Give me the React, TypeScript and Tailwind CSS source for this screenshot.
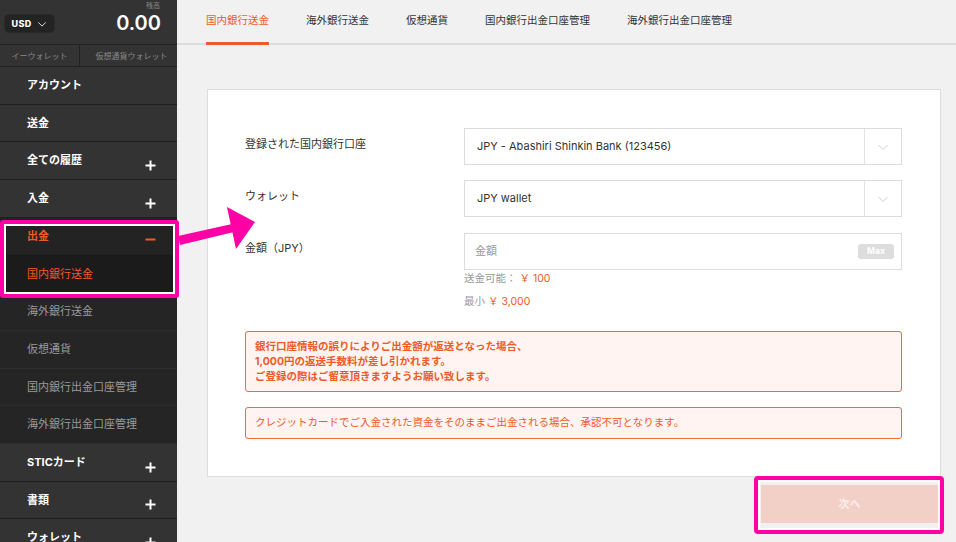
import React from 'react';

type MenuItem = {
  label: string;
  kind: 'main' | 'sub';
  icon?: 'plus' | 'minus';
  active?: boolean;
};

const menu: MenuItem[] = [
  { label: 'アカウント', kind: 'main' },
  { label: '送金', kind: 'main' },
  { label: '全ての履歴', kind: 'main', icon: 'plus' },
  { label: '入金', kind: 'main', icon: 'plus' },
];

const subMenu: MenuItem[] = [
  { label: '海外銀行送金', kind: 'sub' },
  { label: '仮想通貨', kind: 'sub' },
  { label: '国内銀行出金口座管理', kind: 'sub' },
  { label: '海外銀行出金口座管理', kind: 'sub' },
];

const bottomMenu: MenuItem[] = [
  { label: 'STICカード', kind: 'main', icon: 'plus' },
  { label: '書類', kind: 'main', icon: 'plus' },
  { label: 'ウォレット', kind: 'main', icon: 'plus' },
];

const tabs = ['国内銀行送金', '海外銀行送金', '仮想通貨', '国内銀行出金口座管理', '海外銀行出金口座管理'];

const PlusIcon: React.FC<{ color?: string }> = ({ color = '#ffffff' }) => (
  <svg width="11" height="11" viewBox="0 0 11 11">
    <path d="M5.5 0.5v10M0.5 5.5h10" stroke={color} strokeWidth="2" />
  </svg>
);

const MinusIcon: React.FC = () => (
  <svg width="11" height="11" viewBox="0 0 11 11">
    <path d="M0.5 5.5h10" stroke="#f05a28" strokeWidth="2" />
  </svg>
);

const Chevron: React.FC<{ color?: string; size?: number }> = ({ color = '#cfcfcf', size = 12 }) => (
  <svg width={size} height={size} viewBox="0 0 12 12">
    <path d="M1.5 4l4.5 4.5L10.5 4" fill="none" stroke={color} strokeWidth="1" />
  </svg>
);

const SideRow: React.FC<{ item: MenuItem; dark?: boolean }> = ({ item, dark }) => {
  if (item.kind === 'sub') {
    return (
      <div
        className={`flex h-[37.7px] items-center border-b border-[#2d2d2d] pl-[27px] text-[11px] ${
          item.active ? 'bg-[#1b1b1b] text-[#f05a28]' : 'bg-[#252525] text-[#9a9a9a]'
        }`}
      >
        {item.label}
      </div>
    );
  }
  return (
    <div
      className={`flex h-[37.7px] items-center justify-between border-b border-[#1f1f1f] pl-[27px] pr-[21px] text-[11px] font-bold ${
        dark ? 'bg-[#232323]' : 'bg-[#333333]'
      } ${item.active ? 'text-[#f05a28]' : 'text-white'}`}
    >
      <span>{item.label}</span>
      {item.icon === 'plus' && (
        <span className="mt-[10px]">
          <PlusIcon />
        </span>
      )}
      {item.icon === 'minus' && (
        <span className="mt-[6px]">
          <MinusIcon />
        </span>
      )}
    </div>
  );
};

const Sidebar: React.FC = () => (
  <aside className="w-[177px] shrink-0 bg-[#333333]">
    <div className="relative h-[45px] border-b border-[#222222]">
      <div className="absolute left-[4px] top-[14px] flex h-[19px] w-[51px] items-center justify-center gap-[6px] rounded-[5px] border border-[#2a2a2a] bg-[#232323]">
        <span className="text-[9px] font-extrabold tracking-[0.3px] text-white">USD</span>
        <Chevron color="#ffffff" size={10} />
      </div>
      <div className="absolute right-[17px] top-[1px] text-[7px] text-[#8a8a8a]">残高</div>
      <div className="absolute right-[16px] top-[10px] text-[20px] font-semibold leading-[26px] text-white">0.00</div>
    </div>
    <div className="flex h-[22px] border-b border-[#222222] text-[8px] text-[#8a8a8a]">
      <div className="flex w-[80px] items-center justify-center border-r border-[#222222]">イーウォレット</div>
      <div className="flex flex-1 items-center justify-center pl-[6px]">仮想通貨ウォレット</div>
    </div>
    {menu.map((m) => (
      <SideRow key={m.label} item={m} />
    ))}
    <div className="relative">
      <SideRow item={{ label: '出金', kind: 'main', icon: 'minus', active: true }} dark />
      <SideRow item={{ label: '国内銀行送金', kind: 'sub', active: true }} />
      <span className="pointer-events-none absolute left-0 top-[2px] h-[78px] w-[179px] rounded-[3px] border-[4px] border-[#ff00a6]">
        <span className="absolute inset-0 border-2 border-white" />
      </span>
    </div>
    {subMenu.map((m) => (
      <SideRow key={m.label} item={m} />
    ))}
    {bottomMenu.map((m) => (
      <SideRow key={m.label} item={m} />
    ))}
  </aside>
);

const SelectBox: React.FC<{ value: string }> = ({ value }) => (
  <div className="flex h-[37px] w-[438px] items-stretch border border-[#dcdcdc] bg-white">
    <div className="flex flex-1 items-center pl-[12px] text-[11px] text-[#333333]">{value}</div>
    <div className="flex w-[37px] items-center justify-center border-l border-[#e3e3e3]">
      <Chevron />
    </div>
  </div>
);

const App: React.FC = () => {
  return (
    <div className="relative flex h-screen overflow-hidden bg-[#f1f1f1] font-['Inter','Noto_Sans_CJK_JP',sans-serif]">
      <Sidebar />
      <main className="flex-1">
        <nav className="flex h-[45px] gap-[37px] border-b-2 border-[#dddddd] pl-[29px]">
          {tabs.map((t, i) => (
            <div
              key={t}
              className={`relative flex items-center pb-[1px] text-[10.5px] ${
                i === 0 ? 'text-[#f05a28]' : 'text-[#333333]'
              }`}
            >
              {t}
              {i === 0 && <span className="absolute -bottom-[2px] left-0 right-0 h-[3px] bg-[#f05a28]" />}
            </div>
          ))}
        </nav>
        <section className="ml-[30px] mr-[15px] mt-[44px] h-[388px] border border-[#dddddd] bg-white pl-[37px] pr-[38px] pt-[38px]">
          <div className="flex items-start">
            <div className="w-[219px] pt-[8px] text-[11px] text-[#333333]">登録された国内銀行口座</div>
            <SelectBox value="JPY - Abashiri Shinkin Bank (123456)" />
          </div>
          <div className="mt-[15px] flex items-start">
            <div className="w-[219px] pt-[8px] text-[11px] text-[#333333]">ウォレット</div>
            <SelectBox value="JPY wallet" />
          </div>
          <div className="mt-[16px] flex items-start">
            <div className="w-[219px] pt-[7px] text-[11px] text-[#333333]">金額（JPY）</div>
            <div>
              <div className="flex h-[37px] w-[438px] items-center justify-between border border-[#dcdcdc] bg-white pl-[10px] pr-[7px]">
                <span className="text-[11px] text-[#999999]">金額</span>
                <span className="flex h-[15px] w-[36px] items-center justify-center rounded-[3px] bg-[#dddddd] text-[8.5px] font-bold text-white">
                  Max
                </span>
              </div>
              <div className="mt-[2px] text-[10.5px] leading-[14px] text-[#999999]">
                送金可能： <span className="text-[#f05a28]">￥ 100</span>
              </div>
              <div className="mt-[9px] text-[10.5px] leading-[14px] text-[#999999]">
                最小 <span className="text-[#f05a28]">￥ 3,000</span>
              </div>
            </div>
          </div>
          <div className="mt-[22px] rounded-[3px] border border-[#f26a35] bg-[#fff4f1] px-[9px] py-[7px] text-[10.5px] font-bold leading-[15px] text-[#f05a28]">
            <div>銀行口座情報の誤りによりご出金額が返送となった場合、</div>
            <div>1,000円の返送手数料が差し引かれます。</div>
            <div>ご登録の際はご留意頂きますようお願い致します。</div>
          </div>
          <div className="mt-[15px] flex h-[32px] items-center rounded-[3px] border border-[#f26a35] bg-[#fff4f1] px-[9px] text-[10.5px] text-[#f05a28]">
            クレジットカードでご入金された資金をそのままご出金される場合、承認不可となります。
          </div>
        </section>
        <div className="mr-[18px] mt-[8px] flex justify-end">
          <div className="relative">
            <button className="h-[38px] w-[177px] bg-[#f2d0c7] text-[11px] font-bold text-[#fbeeea]">次へ</button>
            <span className="pointer-events-none absolute -bottom-[11px] -left-[7px] -right-[6px] -top-[9px] rounded-[4px] border-[4px] border-[#ff00a6]">
              <span className="absolute inset-0 border-2 border-white" />
            </span>
          </div>
        </div>
      </main>
      <svg className="pointer-events-none absolute left-0 top-0" width="956" height="542">
        <polygon points="178,236 232,224 234,232 180,245" fill="#ff00a6" />
        <polygon points="227,207 255,222 236,249" fill="#ff00a6" />
      </svg>
    </div>
  );
};

export default App;
